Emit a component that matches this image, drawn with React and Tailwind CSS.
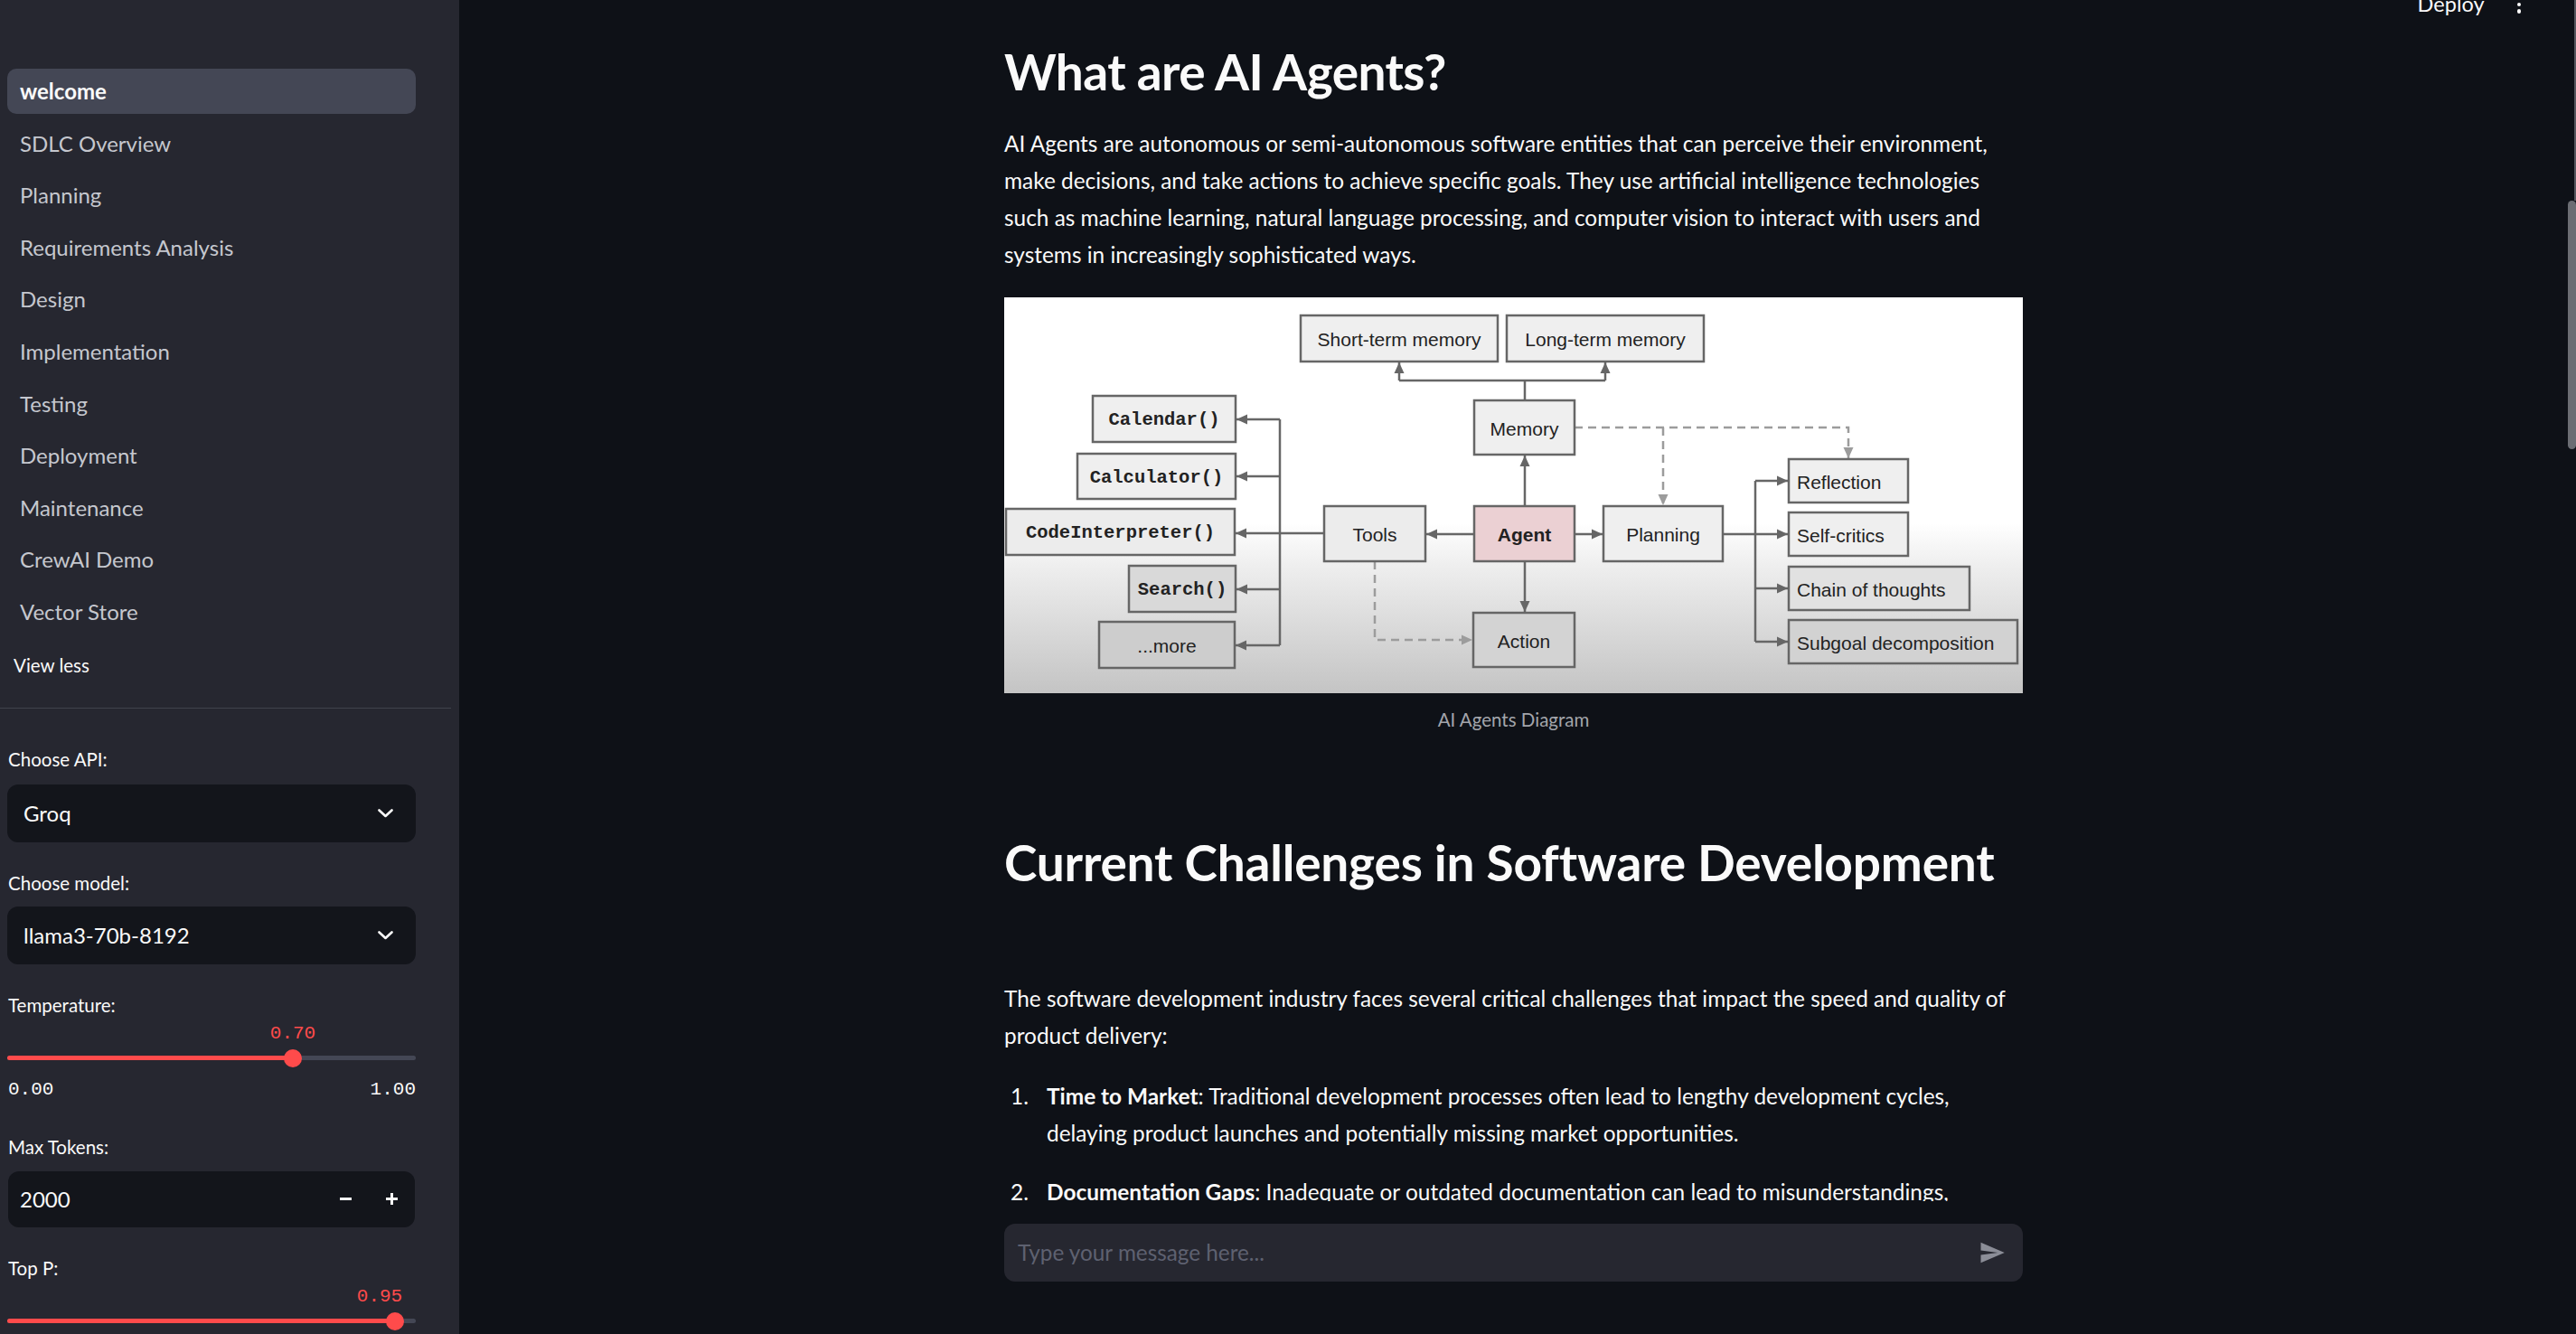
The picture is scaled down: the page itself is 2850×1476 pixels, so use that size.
import React from 'react'

const NAV = ['welcome', 'SDLC Overview', 'Planning', 'Requirements Analysis', 'Design', 'Implementation', 'Testing', 'Deployment', 'Maintenance', 'CrewAI Demo', 'Vector Store']

const BOXES = [
  { x: 328, y: 20, w: 218, h: 51, t: 'Short-term memory' },
  { x: 556, y: 20, w: 218, h: 51, t: 'Long-term memory' },
  { x: 520, y: 114, w: 111, h: 60, t: 'Memory' },
  { x: 520, y: 231, w: 111, h: 61, t: 'Agent', fill: '#ebd0d3', bold: true },
  { x: 519, y: 349, w: 112, h: 60, t: 'Action', fill: '#d3d3d3' },
  { x: 663, y: 231, w: 132, h: 61, t: 'Planning' },
  { x: 354, y: 231, w: 112, h: 61, t: 'Tools', fill: '#ececec' },
  { x: 98, y: 109, w: 158, h: 51, t: 'Calendar()', mono: true },
  { x: 81, y: 173, w: 175, h: 50, t: 'Calculator()', mono: true },
  { x: 2, y: 234, w: 253, h: 51, t: 'CodeInterpreter()', mono: true, fill: '#ececec' },
  { x: 138, y: 297, w: 118, h: 51, t: 'Search()', mono: true, fill: '#d9d9d9' },
  { x: 105, y: 359, w: 150, h: 51, t: '...more', fill: '#cdcdcd' },
  { x: 868, y: 179, w: 132, h: 48, t: 'Reflection', left: true },
  { x: 868, y: 238, w: 132, h: 48, t: 'Self-critics', left: true },
  { x: 868, y: 298, w: 200, h: 48, t: 'Chain of thoughts', left: true, fill: '#e1e1e1' },
  { x: 868, y: 357, w: 253, h: 48, t: 'Subgoal decomposition', left: true, fill: '#d2d2d2' },
]

// [points, arrow direction at last point]
const SOLID = [
  [[[576, 114], [576, 92]]],
  [[[437, 92], [665, 92]]],
  [[[437, 92], [437, 72]], 'up'],
  [[[665, 92], [665, 72]], 'up'],
  [[[576, 231], [576, 175]], 'up'],
  [[[576, 292], [576, 348]], 'down'],
  [[[631, 262], [662, 262]], 'right'],
  [[[520, 262], [467, 262]], 'left'],
  [[[354, 261], [305, 261]]],
  [[[305, 135], [305, 385]]],
  [[[305, 135], [257, 135]], 'left'],
  [[[305, 198], [257, 198]], 'left'],
  [[[305, 261], [256, 261]], 'left'],
  [[[305, 323], [257, 323]], 'left'],
  [[[305, 385], [256, 385]], 'left'],
  [[[795, 262], [831, 262]]],
  [[[831, 203], [831, 381]]],
  [[[831, 203], [867, 203]], 'right'],
  [[[831, 262], [867, 262]], 'right'],
  [[[831, 322], [867, 322]], 'right'],
  [[[831, 381], [867, 381]], 'right'],
]

const DASHED = [
  [[[410, 292], [410, 379], [518, 379]], 'right'],
  [[[631, 144], [934, 144], [934, 178]], 'down'],
  [[[729, 144], [729, 230]], 'down'],
]

const head = (x, y, d) => {
  const L = 12
  const W = 5.5
  const pts = {
    up: [[x, y], [x - W, y + L], [x + W, y + L]],
    down: [[x, y], [x - W, y - L], [x + W, y - L]],
    left: [[x, y], [x + L, y - W], [x + L, y + W]],
    right: [[x, y], [x - L, y - W], [x - L, y + W]],
  }[d]
  return pts.map((p) => p.join(',')).join(' ')
}

const AgentDiagram = () => (
  <div className="w-[1127px] h-[438px] bg-[linear-gradient(180deg,#ffffff_0%,#ffffff_57%,#eeeeee_68%,#c4c4c4_100%)]">
    <svg width="1127" height="438" viewBox="0 0 1127 438">
      {SOLID.map(([pts, dir], i) => (
        <g key={'s' + i}>
          <polyline points={pts.map((p) => p.join(',')).join(' ')} fill="none" stroke="#666" strokeWidth="2.5" />
          {dir && <polygon points={head(...pts[pts.length - 1], dir)} fill="#666" />}
        </g>
      ))}
      {DASHED.map(([pts, dir], i) => (
        <g key={'d' + i}>
          <polyline points={pts.map((p) => p.join(',')).join(' ')} fill="none" stroke="#9c9c9c" strokeWidth="2.5" strokeDasharray="9 6" />
          {dir && <polygon points={head(...pts[pts.length - 1], dir)} fill="#9c9c9c" />}
        </g>
      ))}
      {BOXES.map((b) => (
        <g key={b.t}>
          <rect x={b.x} y={b.y} width={b.w} height={b.h} fill={b.fill || '#efefef'} stroke="#666" strokeWidth="2.5" />
          <text
            x={b.left ? b.x + 9 : b.x + b.w / 2}
            y={b.y + b.h / 2 + 1}
            textAnchor={b.left ? 'start' : 'middle'}
            dominantBaseline="central"
            fill="#222"
            fontFamily={b.mono ? "'Liberation Mono', monospace" : "'Liberation Sans', Arial, sans-serif"}
            fontWeight={b.mono || b.bold ? 700 : 400}
            fontSize={b.mono ? 20.5 : 21}
          >
            {b.t}
          </text>
        </g>
      ))}
    </svg>
  </div>
)

const Chevron = () => (
  <svg width="17" height="10" viewBox="0 0 17 10" fill="none">
    <polyline points="1.5,1.5 8.5,8 15.5,1.5" stroke="#fafafa" strokeWidth="2.6" strokeLinecap="round" strokeLinejoin="round" />
  </svg>
)

const SelectBox = ({ value }) => (
  <div className="h-[64px] rounded-[12px] bg-[#13151b] pl-[18px] pr-[25px] flex items-center justify-between text-[24px] text-[#fafafa]">
    <span>{value}</span>
    <Chevron />
  </div>
)

const Label = ({ children, className = '' }) => (
  <div className={'h-[30px] pl-[1px] flex items-center text-[20.5px] text-[#fafafa] ' + className}>{children}</div>
)

const Slider = ({ value, labelAt }) => {
  const pct = value * 100
  return (
    <div>
      <div className="relative mt-[5px] h-[24px]">
        <span
          className="absolute top-0 -translate-x-1/2 font-['Liberation_Mono',monospace] text-[21px] leading-[24px] text-[#ff4b4b]"
          style={{ left: labelAt }}
        >
          {value.toFixed(2)}
        </span>
      </div>
      <div className="relative mt-[5px] h-[20px] flex items-center">
        <div className="h-[5px] w-full rounded-full bg-[#444755]">
          <div className="h-full rounded-full bg-[#ff4b4b]" style={{ width: `${pct}%` }} />
        </div>
        <div className="absolute top-0 w-[20px] h-[20px] -translate-x-1/2 rounded-full bg-[#ff4b4b]" style={{ left: `${pct}%` }} />
      </div>
    </div>
  )
}

const Sidebar = () => (
  <aside className="w-[508px] shrink-0 h-full bg-[#262730] overflow-hidden">
    <nav className="pt-[76px] pl-[8px] w-[460px] flex flex-col gap-[7.6px]">
      {NAV.map((n, i) => (
        <div
          key={n}
          className={
            i === 0
              ? 'h-[50px] rounded-[10px] bg-[#444755] px-[14px] flex items-center text-[24px] font-bold text-[#fafafa]'
              : 'h-[50px] px-[14px] flex items-center text-[24px] text-[#c5c7ce]'
          }
        >
          {n}
        </div>
      ))}
    </nav>
    <div className="mt-[19px] pl-[15px] h-[30px] flex items-center text-[20.5px] text-[#fafafa]">View less</div>
    <div className="mt-[32px] h-[1px] w-[499px] bg-[#40424c]" />
    <div className="pl-[8px] w-[460px]">
      <Label className="mt-[41px]">Choose API:</Label>
      <div className="mt-[13px]">
        <SelectBox value="Groq" />
      </div>
      <Label className="mt-[30px]">Choose model:</Label>
      <div className="mt-[11px]">
        <SelectBox value="llama3-70b-8192" />
      </div>
      <Label className="mt-[30px]">Temperature:</Label>
      <Slider value={0.7} labelAt="316px" />
      <div className="mt-[13px] h-[24px] flex justify-between font-['Liberation_Mono',monospace] text-[21px] leading-[24px] text-[#fafafa]">
        <span className="pl-[1px]">0.00</span>
        <span>1.00</span>
      </div>
      <Label className="mt-[36px]">Max Tokens:</Label>
      <div className="mt-[12px] ml-[1px] w-[450px] h-[62px] rounded-[12px] bg-[#13151b] flex items-center text-[24px] text-[#fafafa]">
        <span className="flex-1 pl-[13px]">2000</span>
        <div className="w-[51px] h-full flex items-center justify-center">
          <div className="w-[13px] h-[3px] bg-[#fafafa]" />
        </div>
        <div className="w-[51px] h-full flex items-center justify-center">
          <svg width="13" height="13" viewBox="0 0 13 13">
            <rect x="0" y="5" width="13" height="3" fill="#fafafa" />
            <rect x="5" y="0" width="3" height="13" fill="#fafafa" />
          </svg>
        </div>
      </div>
      <Label className="mt-[30px]">Top P:</Label>
      <Slider value={0.95} labelAt="412px" />
    </div>
  </aside>
)

export default function App() {
  return (
    <div className="w-[2850px] h-[1476px] flex overflow-hidden bg-[#0e1117] font-['Lato',sans-serif] text-[#fafafa]">
      <Sidebar />
      <main className="relative flex-1 h-full flex flex-col">
        <div className="absolute top-[-11px] right-[52px] flex items-center gap-[36px]">
          <span className="text-[23.5px] leading-[30px]">Deploy</span>
          <div className="flex flex-col gap-[3px] pt-[2px]">
            <div className="w-[4.5px] h-[4.5px] rounded-full bg-[#fafafa]" />
            <div className="w-[4.5px] h-[4.5px] rounded-full bg-[#fafafa]" />
            <div className="w-[4.5px] h-[4.5px] rounded-full bg-[#fafafa]" />
          </div>
        </div>
        <div className="flex-1 overflow-hidden">
          <div className="mx-auto w-[1127px] pt-[46px]">
            <h2 className="text-[55px] leading-[66px] font-bold tracking-[-0.6px]">What are AI Agents?</h2>
            <p className="mt-[26px] text-[24.4px] leading-[41px] whitespace-nowrap">
              AI Agents are autonomous or semi-autonomous software entities that can perceive their environment,
              <br />
              make decisions, and take actions to achieve specific goals. They use artificial intelligence technologies
              <br />
              such as machine learning, natural language processing, and computer vision to interact with users and
              <br />
              systems in increasingly sophisticated ways.
            </p>
            <div className="mt-[27px]">
              <AgentDiagram />
            </div>
            <div className="mt-[15px] h-[28px] leading-[28px] text-center text-[20.5px] text-[#a3a5ab]">AI Agents Diagram</div>
            <h2 className="mt-[111px] text-[55px] leading-[66px] font-bold tracking-[-0.2px] whitespace-nowrap">Current Challenges in Software Development</h2>
            <p className="mt-[97px] text-[24.4px] leading-[41px] whitespace-nowrap">
              The software development industry faces several critical challenges that impact the speed and quality of
              <br />
              product delivery:
            </p>
            <ol className="mt-[26px] flex flex-col gap-[24px] text-[24.4px] leading-[41px]">
              <li className="flex">
                <span className="w-[47px] shrink-0 pl-[7px]">1.</span>
                <div className="whitespace-nowrap">
                  <b>Time to Market</b>: Traditional development processes often lead to lengthy development cycles,
                  <br />
                  delaying product launches and potentially missing market opportunities.
                </div>
              </li>
              <li className="flex">
                <span className="w-[47px] shrink-0 pl-[7px]">2.</span>
                <div className="whitespace-nowrap">
                  <b>Documentation Gaps</b>: Inadequate or outdated documentation can lead to misunderstandings,
                </div>
              </li>
            </ol>
          </div>
        </div>
        <div className="h-[147px] shrink-0 bg-[#0e1117] pt-[25px]">
          <div className="mx-auto w-[1127px] h-[64px] rounded-[12px] bg-[#262730] pl-[15px] pr-[19px] flex items-center justify-between">
            <span className="text-[24.3px] text-[#5e6170]">Type your message here...</span>
            <svg width="30" height="30" viewBox="0 0 24 24">
              <path d="M2.01 21L23 12 2.01 3 2 10l15 2-15 2z" fill="#8b8d97" />
            </svg>
          </div>
        </div>
      </main>
      <div className="w-[9px] shrink-0 h-full flex flex-col">
        <div className="h-[222px] flex justify-end">
          <div className="w-[2px] h-full bg-[#55575e]" />
        </div>
        <div className="h-[275px] w-[9px] rounded-full bg-[#6b6d73]" />
      </div>
    </div>
  )
}
